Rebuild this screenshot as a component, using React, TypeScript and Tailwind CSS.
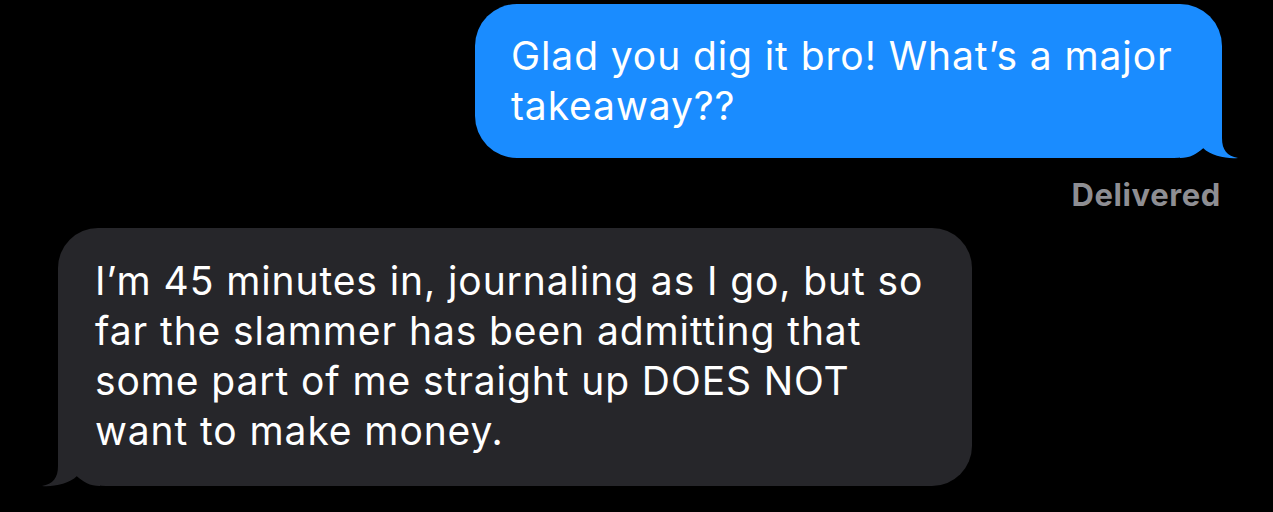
import React from "react";

const font = { fontFamily: "Inter, 'Noto Sans', sans-serif" };

export default function App() {
  return (
    <div className="w-full h-[512px] bg-black flex flex-col overflow-hidden" style={font}>
      <div className="flex justify-end pr-[51px] pt-[4px]">
        <div className="relative w-[747px] bg-[#1a8cff] rounded-[42px] rounded-br-[48px] pl-[36px] pt-[27px] pb-[27px] text-white text-[39px] leading-[50px] tracking-[0.9px]">
          <div className="whitespace-nowrap">Glad you dig it bro! What’s a major</div>
          <div className="whitespace-nowrap">takeaway??</div>
          <svg className="absolute right-[-18px] bottom-[-2px]" width="60" height="50" viewBox="0 0 60 50">
            <path
              d="M42 0 L42 28 C42 40 47 46 58 48 C47 49 31 46 23 38 C17 44 10 48 0 48 L0 0 Z"
              fill="#1a8cff"
            />
          </svg>
        </div>
      </div>
      <div className="mt-[21px] pr-[52px] text-right text-[31px] leading-[31px] font-bold tracking-[0.6px] text-[#8e8e93]">
        Delivered
      </div>
      <div className="flex pl-[58px] mt-[18px]">
        <div className="relative w-[914px] bg-[#26262a] rounded-[40px] rounded-bl-[48px] pl-[37px] pt-[28px] pb-[30px] text-white text-[39px] leading-[50px] tracking-[0.9px]">
          <div className="whitespace-nowrap">I’m 45 minutes in, journaling as I go, but so</div>
          <div className="whitespace-nowrap">far the slammer has been admitting that</div>
          <div className="whitespace-nowrap">some part of me straight up DOES NOT</div>
          <div className="whitespace-nowrap">want to make money.</div>
          <svg className="absolute left-[-18px] bottom-[-2px]" width="60" height="50" viewBox="0 0 60 50">
            <path
              d="M18 0 L18 28 C18 40 13 46 2 48 C13 49 29 46 37 38 C43 44 50 48 60 48 L60 0 Z"
              fill="#26262a"
            />
          </svg>
        </div>
      </div>
    </div>
  );
}
